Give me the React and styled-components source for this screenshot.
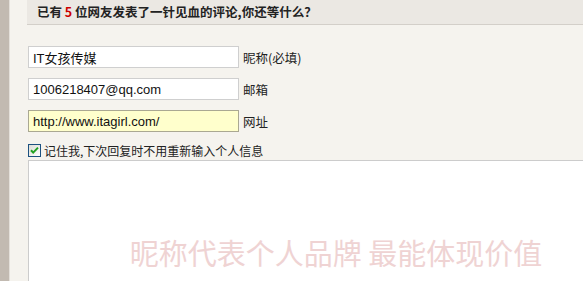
import styled, { createGlobalStyle } from "styled-components";

const GlobalStyle = createGlobalStyle`
  html, body {
    margin: 0;
    padding: 0;
    background: #f5f3ee;
    overflow: hidden;
  }
`;

const cjk = `"Noto Sans CJK SC", "Liberation Sans", sans-serif`;

const fields = [
  { value: "IT女孩传媒", label: "昵称(必填)" },
  { value: "1006218407@qq.com", label: "邮箱" },
  { value: "http://www.itagirl.com/", label: "网址", active: true },
];

function CheckMark() {
  return (
    <svg width="13" height="13" viewBox="0 0 13 13">
      <defs>
        <linearGradient id="cbfill" x1="0" y1="0" x2="1" y2="1">
          <stop offset="0" stopColor="#dcdcd4" />
          <stop offset="1" stopColor="#ffffff" />
        </linearGradient>
      </defs>
      <rect x="0.5" y="0.5" width="12" height="12" fill="url(#cbfill)" stroke="#1c5180" />
      <path d="M3 6.2 L5.2 8.6 L10 3.6" fill="none" stroke="#21a121" strokeWidth="2" />
    </svg>
  );
}

export default function App() {
  return (
    <>
      <GlobalStyle />
      <Page>
        <Strip />
        <Main>
          <Header>
            已有 <Count>5</Count> 位网友发表了一针见血的评论,你还等什么？
          </Header>
          <Form>
            {fields.map((f) => (
              <Row key={f.label}>
                <Input $active={f.active} defaultValue={f.value} />
                <Label>{f.label}</Label>
              </Row>
            ))}
            <Remember>
              <CheckMark />
              <span>记住我,下次回复时不用重新输入个人信息</span>
            </Remember>
            <CommentBox>
              <Watermark>昵称代表个人品牌 最能体现价值</Watermark>
            </CommentBox>
          </Form>
        </Main>
      </Page>
    </>
  );
}

const Page = styled.div`
  display: flex;
  min-height: 281px;
  font-family: "Liberation Sans", "Noto Sans CJK SC", sans-serif;
`;

const Strip = styled.div`
  width: 9px;
  flex: none;
  background: #c2bab1;
  border-right: 1px solid #e4e0da;
`;

const Main = styled.div`
  flex: 1;
  padding-left: 17px;
`;

const Header = styled.div`
  height: 24px;
  line-height: 24px;
  padding-left: 10px;
  background: #ebe8e3;
  border-bottom: 1px solid #d3cfc9;
  font-family: ${cjk};
  font-size: 12.5px;
  font-weight: bold;
  color: #222;
  white-space: nowrap;
`;

const Count = styled.span`
  color: #cc0000;
`;

const Form = styled.div`
  padding: 21px 0 0 1px;
  display: flex;
  flex-direction: column;
`;

const Row = styled.div`
  display: flex;
  align-items: center;
  gap: 4px;
  margin-bottom: 10px;
`;

const Input = styled.input`
  box-sizing: border-box;
  width: 211px;
  height: 22px;
  margin: 0;
  padding: 0 4px;
  border: 1px solid ${(p) => (p.$active ? "#aaa892" : "#cfcfcf")};
  background: ${(p) => (p.$active ? "#ffffcc" : "#ffffff")};
  font-family: "Liberation Sans", "Noto Sans CJK SC", sans-serif;
  font-size: 13px;
  color: #111;
  outline: none;
`;

const Label = styled.span`
  font-family: ${cjk};
  font-size: 12.5px;
  color: #222;
`;

const Remember = styled.label`
  display: flex;
  align-items: center;
  gap: 3px;
  height: 16px;
  font-family: ${cjk};
  font-size: 12px;
  color: #222;
  white-space: nowrap;
`;

const CommentBox = styled.div`
  box-sizing: border-box;
  margin-top: 2px;
  width: 616px;
  height: 184px;
  background: #ffffff;
  border: 1px solid #cccccc;
  display: flex;
  align-items: center;
  justify-content: center;
`;

const Watermark = styled.span`
  font-family: "Noto Sans CJK SC", sans-serif;
  font-size: 29px;
  color: #efd3d3;
  white-space: nowrap;
`;
